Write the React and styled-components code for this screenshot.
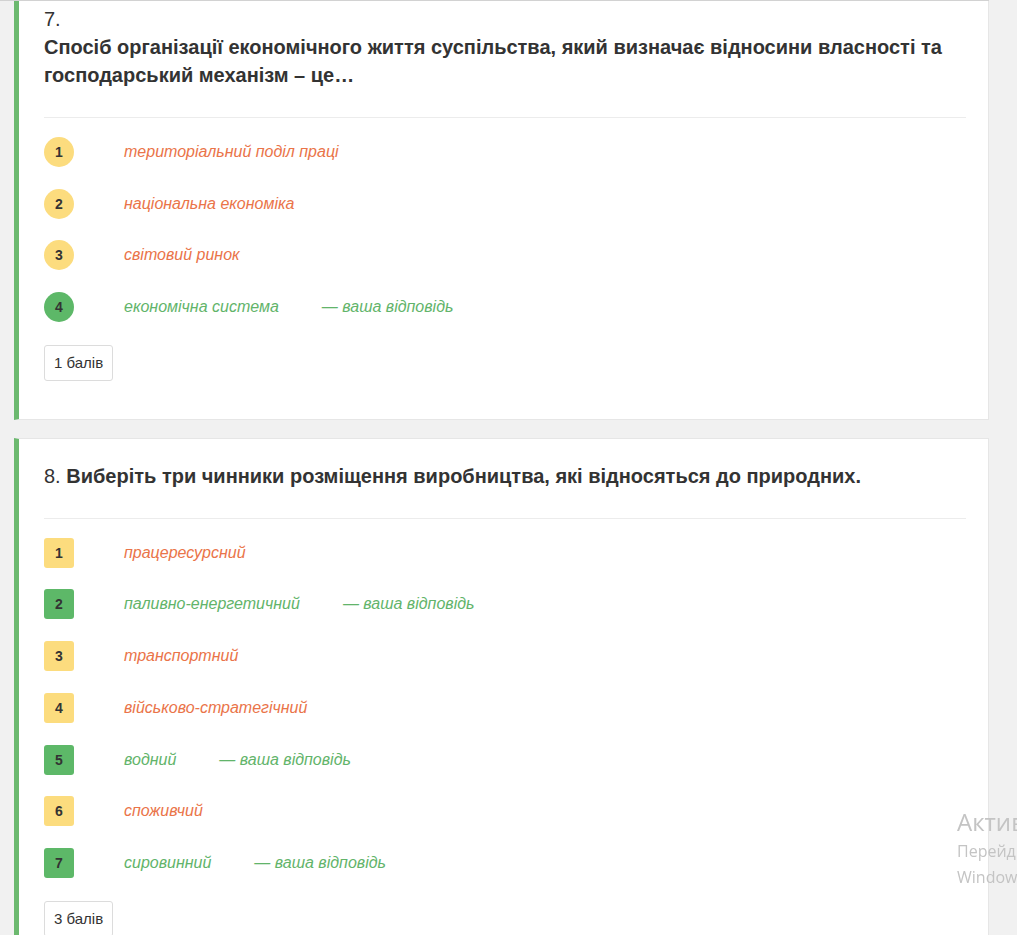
import React from 'react';
import styled, { createGlobalStyle } from 'styled-components';

const GlobalStyle = createGlobalStyle`
  html, body {
    margin: 0;
    padding: 0;
    background: #f1f1f1;
  }
  body {
    font-family: "Liberation Sans", Arial, sans-serif;
    color: #333;
  }
`;

// Сторінка з результатами
const Page = styled.div`
  border-top: 1px solid #d2d2d2;
  overflow: hidden;
  padding-left: 14px;
  width: 975px;
  height: 934px;
`;

const Card = styled.section`
  background: #fff;
  border: 1px solid #e6e6e6;
  border-left: 5px solid #6cb96f;
  padding: 23px 22px 37px 25px;
  margin-bottom: 18px;

  &:first-child {
    margin-top: -20px;
    padding-bottom: 38px;
  }
`;

const Header = styled.div`
  font-size: 20px;
  line-height: 28px;
  padding-bottom: 28px;
  border-bottom: 1px solid #ececec;
`;

const Number = styled.span`
  font-weight: normal;
  display: ${(p) => (p.$block ? 'block' : 'inline')};
`;

const Question = styled.span`
  font-weight: bold;
  display: ${(p) => (p.$block ? 'block' : 'inline')};
`;

const Options = styled.ul`
  list-style: none;
  margin: 0;
  padding: 19px 0 1px;
`;

const Option = styled.li`
  display: flex;
  align-items: center;
  height: 30px;
  margin-bottom: 21.7px;
`;

const Badge = styled.span`
  width: 30px;
  height: 30px;
  flex: none;
  display: flex;
  align-items: center;
  justify-content: center;
  font-size: 14px;
  font-weight: bold;
  color: #333;
  border-radius: ${(p) => (p.$round ? '50%' : '3px')};
  background: ${(p) => (p.$correct ? '#5db868' : '#fcdc7e')};
`;

const Answer = styled.span`
  margin-left: 50px;
  font-size: 16px;
  font-style: italic;
  color: ${(p) => (p.$correct ? '#62b46a' : '#ea7449')};
`;

const Mine = styled.span`
  margin-left: 43px;
  font-size: 16px;
  font-style: italic;
  color: #62b46a;
`;

const Points = styled.div`
  display: inline-flex;
  align-items: center;
  height: 34px;
  padding: 0 9px;
  border: 1px solid #dcdcdc;
  border-radius: 3px;
  font-size: 15px;
  color: #333;
`;

// Водяний знак Windows у правому нижньому куті
const Watermark = styled.div`
  position: fixed;
  left: 957px;
  top: 806px;
  white-space: nowrap;
  font-family: "Open Sans", "Noto Sans", sans-serif;
  color: #c4c4c4;
  pointer-events: none;
`;

const WatermarkTitle = styled.div`
  font-size: 24px;
  line-height: 32px;
`;

const WatermarkLine = styled.div`
  font-size: 16px;
  line-height: 26px;
`;

const questions = [
  {
    num: '7.',
    text: 'Спосіб організації економічного життя суспільства, який визначає відносини власності та господарський механізм – це…',
    block: true,
    round: true,
    points: '1 балів',
    options: [
      { text: 'територіальний поділ праці' },
      { text: 'національна економіка' },
      { text: 'світовий ринок' },
      { text: 'економічна система', correct: true },
    ],
  },
  {
    num: '8.',
    text: 'Виберіть три чинники розміщення виробництва, які відносяться до природних.',
    block: false,
    round: false,
    points: '3 балів',
    options: [
      { text: 'працересурсний' },
      { text: 'паливно-енергетичний', correct: true },
      { text: 'транспортний' },
      { text: 'військово-стратегічний' },
      { text: 'водний', correct: true },
      { text: 'споживчий' },
      { text: 'сировинний', correct: true },
    ],
  },
];

const App = () => {
  return (
    <>
      <GlobalStyle />
      <Page>
        {questions.map((q) => (
          <Card key={q.num}>
            <Header>
              <Number $block={q.block}>{q.num}</Number>
              {!q.block && ' '}
              <Question $block={q.block}>{q.text}</Question>
            </Header>
            <Options>
              {q.options.map((o, i) => (
                <Option key={i}>
                  <Badge $round={q.round} $correct={o.correct}>{i + 1}</Badge>
                  <Answer $correct={o.correct}>{o.text}</Answer>
                  {o.correct && <Mine>— ваша відповідь</Mine>}
                </Option>
              ))}
            </Options>
            <Points>{q.points}</Points>
          </Card>
        ))}
      </Page>
      <Watermark>
        <WatermarkTitle>Активация Windows</WatermarkTitle>
        <WatermarkLine>Перейдите в раздел "Параметры", чтобы активировать</WatermarkLine>
        <WatermarkLine>Windows.</WatermarkLine>
      </Watermark>
    </>
  );
};

export default App;
